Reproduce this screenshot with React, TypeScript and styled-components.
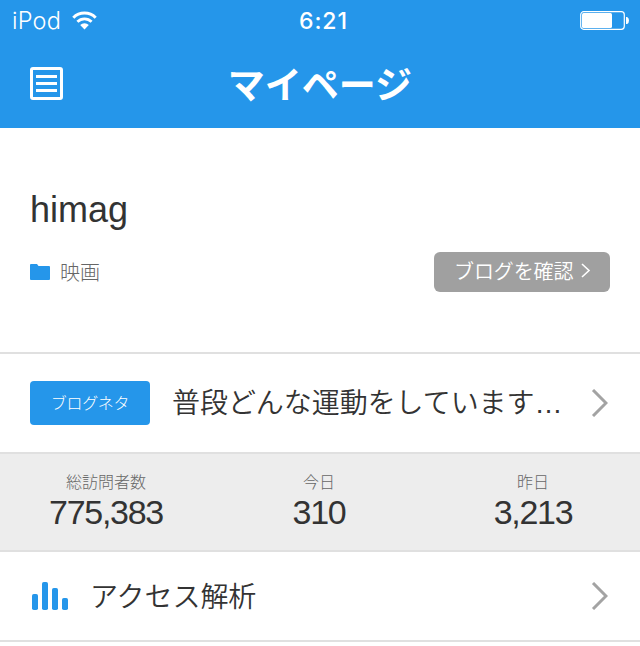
import type { ReactNode } from "react";
import styled, { createGlobalStyle } from "styled-components";

const colors = {
  primary: "#2596ea",
  text: "#333333",
  textSub: "#666666",
  border: "#e0e0e0",
  panel: "#ededed",
  button: "#a0a0a0",
  arrow: "#a3a3a3",
  white: "#ffffff",
};

const GlobalStyle = createGlobalStyle`
  * {
    box-sizing: border-box;
  }

  body {
    margin: 0;
    background: ${colors.white};
    color: ${colors.text};
    font-family: "Liberation Sans", "Noto Sans CJK JP", sans-serif;
    overflow: hidden;
  }

  p, h1, h2 {
    margin: 0;
    font-weight: 400;
  }

  svg {
    display: block;
    flex-shrink: 0;
  }
`;

const Page = styled.div`
  width: 640px;
  height: 646px;
  overflow: hidden;
`;

const Header = styled.header`
  height: 128px;
  background: ${colors.primary};
  color: ${colors.white};
`;

const StatusBar = styled.div`
  display: grid;
  grid-template-columns: 1fr auto 1fr;
  align-items: center;
  height: 40px;
  padding: 1px 11px 0 12px;
  font-family: Inter, "Liberation Sans", sans-serif;
  line-height: 40px;
`;

const Carrier = styled.div`
  display: flex;
  align-items: center;
  gap: 11px;
  font-size: 23.5px;
  font-weight: 300;
  letter-spacing: 0.2px;

  svg {
    margin-bottom: 2px;
  }
`;

const Clock = styled.time`
  padding-left: 6px;
  font-size: 23px;
  font-weight: 500;
  letter-spacing: 1px;
`;

const Battery = styled.div`
  justify-self: end;
  padding-bottom: 2px;
`;

const NavBar = styled.div`
  display: grid;
  grid-template-columns: 34px 1fr 34px;
  align-items: center;
  height: 86px;
  padding: 0 29px;
`;

const Title = styled.h1`
  font-family: "Noto Sans CJK JP", sans-serif;
  font-size: 37px;
  font-weight: 700;
  line-height: 84px;
  text-align: center;
`;

const Profile = styled.section`
  height: 226px;
  padding: 60px 30px 0;
  border-bottom: 2px solid ${colors.border};
`;

const BlogName = styled.h2`
  font-size: 36px;
  line-height: 44px;
`;

const ProfileFooter = styled.div`
  display: flex;
  align-items: center;
  justify-content: space-between;
  margin-top: 20px;
`;

const Genre = styled.div`
  display: flex;
  align-items: center;
  gap: 10px;
  color: ${colors.textSub};
  font-family: "Noto Sans CJK JP", sans-serif;
  font-size: 20px;
  font-weight: 300;
  line-height: 40px;
`;

const BlogButton = styled.button`
  display: flex;
  align-items: center;
  gap: 8px;
  width: 176px;
  height: 40px;
  padding: 0 0 3px 20px;
  border: 0;
  border-radius: 6px;
  background: ${colors.button};
  color: ${colors.white};
  font-family: "Noto Sans CJK JP", sans-serif;
  font-size: 20px;
  font-weight: 350;
  letter-spacing: -0.1px;
`;

const Row = styled.div<{ $height: number }>`
  display: flex;
  align-items: center;
  height: ${({ $height }) => $height}px;
  padding: 0 32px 0 30px;
  border-bottom: 2px solid ${colors.border};
`;

const Tag = styled.span`
  width: 120px;
  height: 44px;
  margin-right: 22px;
  border-radius: 4px;
  background: ${colors.primary};
  color: ${colors.white};
  font-family: "Noto Sans CJK JP", sans-serif;
  font-size: 16px;
  font-weight: 300;
  letter-spacing: -0.3px;
  line-height: 43px;
  text-align: center;
`;

const RowText = styled.p`
  flex: 1;
  padding-bottom: 2px;
  font-family: "Noto Sans CJK JP", sans-serif;
  font-size: 28px;
  font-weight: 350;
  letter-spacing: -0.05px;
  line-height: 44px;
  white-space: nowrap;
`;

const Ellipsis = styled.span`
  font-family: "Liberation Sans", sans-serif;
`;

const Stats = styled.section`
  display: grid;
  grid-template-columns: 212px 214px 214px;
  height: 98px;
  padding-top: 15px;
  border-bottom: 2px solid ${colors.border};
  background: ${colors.panel};
  text-align: center;
`;

const StatLabel = styled.p`
  color: ${colors.textSub};
  font-family: "Noto Sans CJK JP", sans-serif;
  font-size: 16px;
  font-weight: 300;
  line-height: 24px;
`;

const StatValue = styled.p`
  font-size: 34px;
  letter-spacing: -1.3px;
  line-height: 38px;
`;

const MenuIcon = styled.span`
  width: 60px;
  padding-left: 2px;
`;

const WifiIcon = () => (
  <svg width="25" height="19" viewBox="0 0 25 19" fill="none">
    <path d="M1.3 6.7a15.8 15.8 0 0 1 22.4 0" stroke="#fff" strokeWidth="3" />
    <path d="M5.4 10.8a10 10 0 0 1 14.2 0" stroke="#fff" strokeWidth="2.8" />
    <path d="M8.2 14.1a6.1 6.1 0 0 1 8.6 0L12.5 18.4z" fill="#fff" />
  </svg>
);

const BatteryIcon = () => (
  <svg width="49" height="19" viewBox="0 0 49 19" fill="none">
    <rect x="0.7" y="0.7" width="43.6" height="17.6" rx="3" stroke="#fff" strokeWidth="1.2" />
    <rect x="2" y="2" width="30" height="15" rx="1.5" fill="#fff" />
    <path d="M46 6h1.2q1.8 1 1.8 3.5t-1.8 3.5H46z" fill="#fff" />
  </svg>
);

const ListIcon = () => (
  <svg width="35" height="35" viewBox="0 0 35 35" fill="none">
    <rect x="2.5" y="2.5" width="30" height="30" rx="1.5" stroke="#fff" strokeWidth="3" />
    <path d="M7 10.5h21M7 17.5h21M7 24.5h21" stroke="#fff" strokeWidth="3" />
  </svg>
);

const FolderIcon = () => (
  <svg width="20" height="16" viewBox="0 0 20 16">
    <path
      d="M1 0h6l1.5 2H19q1 0 1 1v12q0 1-1 1H1q-1 0-1-1V1q0-1 1-1z"
      fill={colors.primary}
    />
  </svg>
);

const ChartIcon = () => (
  <svg width="36" height="28" viewBox="0 0 36 28" fill={colors.primary}>
    <rect x="0" y="12" width="6" height="16" rx="1.8" />
    <rect x="10" y="0" width="6" height="28" rx="1.8" />
    <rect x="20" y="6" width="6" height="22" rx="1.8" />
    <rect x="30" y="16" width="6" height="12" rx="1.8" />
  </svg>
);

const SmallArrow = () => (
  <svg width="10" height="15" viewBox="0 0 10 15" fill="none">
    <path d="M1 1l7 6.5L1 14" stroke="#fff" strokeWidth="1.6" />
  </svg>
);

const RowArrow = () => (
  <svg width="17" height="28" viewBox="0 0 17 28" fill="none">
    <path d="M2 1l13 13L2 27" stroke={colors.arrow} strokeWidth="3" />
  </svg>
);

interface StatProps {
  label: string;
  value: number;
}

const Stat = ({ label, value }: StatProps) => (
  <div>
    <StatLabel>{label}</StatLabel>
    <StatValue>{value.toLocaleString("en-US")}</StatValue>
  </div>
);

interface LinkRowProps {
  height: number;
  lead: ReactNode;
  children: ReactNode;
}

const LinkRow = ({ height, lead, children }: LinkRowProps) => (
  <Row $height={height}>
    {lead}
    <RowText>{children}</RowText>
    <RowArrow />
  </Row>
);

const stats: StatProps[] = [
  { label: "総訪問者数", value: 775383 },
  { label: "今日", value: 310 },
  { label: "昨日", value: 3213 },
];

export default function App() {
  return (
    <Page>
      <GlobalStyle />
      <Header>
        <StatusBar>
          <Carrier>
            iPod
            <WifiIcon />
          </Carrier>
          <Clock>6:21</Clock>
          <Battery>
            <BatteryIcon />
          </Battery>
        </StatusBar>
        <NavBar>
          <ListIcon />
          <Title>マイページ</Title>
        </NavBar>
      </Header>

      <Profile>
        <BlogName>himag</BlogName>
        <ProfileFooter>
          <Genre>
            <FolderIcon />
            映画
          </Genre>
          <BlogButton>
            ブログを確認
            <SmallArrow />
          </BlogButton>
        </ProfileFooter>
      </Profile>

      <LinkRow height={100} lead={<Tag>ブログネタ</Tag>}>
        普段どんな運動をしています<Ellipsis>…</Ellipsis>
      </LinkRow>

      <Stats>
        {stats.map((stat) => (
          <Stat key={stat.label} {...stat} />
        ))}
      </Stats>

      <LinkRow
        height={90}
        lead={
          <MenuIcon>
            <ChartIcon />
          </MenuIcon>
        }
      >
        アクセス解析
      </LinkRow>
    </Page>
  );
}
